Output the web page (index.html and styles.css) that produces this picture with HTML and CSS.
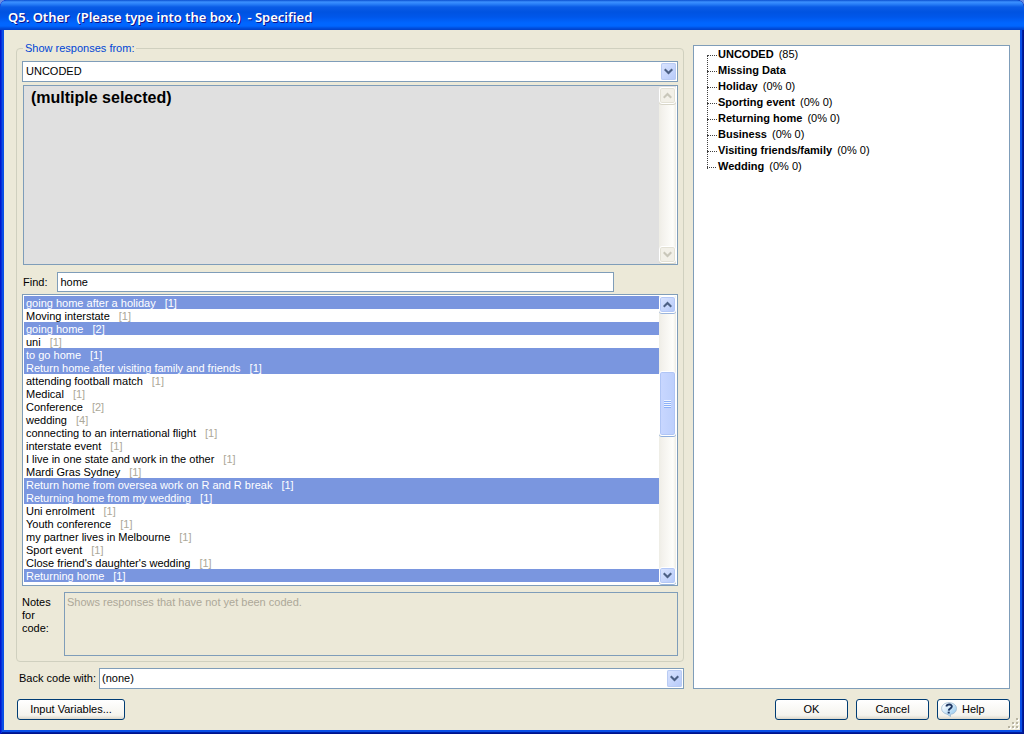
FILE: index.html
```html
<!DOCTYPE html>
<html lang="en">
<head>
<meta charset="utf-8">
<title>Q5. Other - Specified</title>
<link rel="stylesheet" href="styles.css">
</head>
<body>
<div class="window">
  <header class="titlebar"><h1 class="title">Q5. Other&nbsp; (Please type into the box.)&nbsp; - Specified</h1></header>
  <form class="client">
    <main class="panes">
      <section class="left">
        <fieldset class="group">
          <legend><label for="source">Show responses from:</label></legend>
          <div class="combo">
            <select id="source"><option>UNCODED</option></select>
            <span class="drop"><svg viewBox="0 0 9 7"><path d="M.7 1.200 4.500 5 8.300 1.200"/></svg></span>
          </div>
          <div class="preview">
            <textarea class="preview-text" aria-label="Selected response" readonly>(multiple selected)</textarea>
            <div class="scroll off">
              <button type="button" class="arrow" aria-label="Scroll up" disabled><svg viewBox="0 0 9 7"><path d="M.7 5.800 4.500 2 8.300 5.800"/></svg></button>
              <button type="button" class="arrow" aria-label="Scroll down" disabled><svg viewBox="0 0 9 7"><path d="M.7 1.200 4.500 5 8.300 1.200"/></svg></button>
            </div>
          </div>
          <div class="find">
            <label for="find">Find:</label>
            <input id="find" type="text" value="home">
          </div>
          <div class="list">
            <ul class="rows" role="listbox" aria-multiselectable="true" aria-label="Responses">
              <li class="sel" role="option" aria-selected="true">going home after a holiday<span>[1]</span></li>
              <li role="option">Moving interstate<span>[1]</span></li>
              <li class="sel" role="option" aria-selected="true">going home<span>[2]</span></li>
              <li role="option">uni<span>[1]</span></li>
              <li class="sel" role="option" aria-selected="true">to go home<span>[1]</span></li>
              <li class="sel" role="option" aria-selected="true">Return home after visiting family and friends<span>[1]</span></li>
              <li role="option">attending football match<span>[1]</span></li>
              <li role="option">Medical<span>[1]</span></li>
              <li role="option">Conference<span>[2]</span></li>
              <li role="option">wedding<span>[4]</span></li>
              <li role="option">connecting to an international flight<span>[1]</span></li>
              <li role="option">interstate event<span>[1]</span></li>
              <li role="option">I live in one state and work in the other<span>[1]</span></li>
              <li role="option">Mardi Gras Sydney<span>[1]</span></li>
              <li class="sel" role="option" aria-selected="true">Return home from oversea work on R and R break<span>[1]</span></li>
              <li class="sel" role="option" aria-selected="true">Returning home from my wedding<span>[1]</span></li>
              <li role="option">Uni enrolment<span>[1]</span></li>
              <li role="option">Youth conference<span>[1]</span></li>
              <li role="option">my partner lives in Melbourne<span>[1]</span></li>
              <li role="option">Sport event<span>[1]</span></li>
              <li role="option">Close friend's daughter's wedding<span>[1]</span></li>
              <li class="sel" role="option" aria-selected="true">Returning home<span>[1]</span></li>
            </ul>
            <div class="scroll">
              <button type="button" class="arrow" aria-label="Scroll up"><svg viewBox="0 0 9 7"><path d="M.7 5.800 4.500 2 8.300 5.800"/></svg></button>
              <div class="track"><div class="thumb"><i></i></div></div>
              <button type="button" class="arrow" aria-label="Scroll down"><svg viewBox="0 0 9 7"><path d="M.7 1.200 4.500 5 8.300 1.200"/></svg></button>
            </div>
          </div>
          <div class="notes">
            <label for="notes">Notes for code:</label>
            <textarea id="notes" disabled>Shows responses that have not yet been coded.</textarea>
          </div>
        </fieldset>
        <div class="back">
          <label for="back">Back code with:</label>
          <div class="combo">
            <select id="back"><option>(none)</option></select>
            <span class="drop"><svg viewBox="0 0 9 7"><path d="M.7 1.200 4.500 5 8.300 1.200"/></svg></span>
          </div>
        </div>
      </section>
      <ul class="tree">
        <li><b>UNCODED</b> (85)</li>
        <li><b>Missing Data</b></li>
        <li><b>Holiday</b> (0% 0)</li>
        <li><b>Sporting event</b> (0% 0)</li>
        <li><b>Returning home</b> (0% 0)</li>
        <li><b>Business</b> (0% 0)</li>
        <li><b>Visiting friends/family</b> (0% 0)</li>
        <li><b>Wedding</b> (0% 0)</li>
      </ul>
    </main>
    <footer class="actions">
      <button type="button" class="btn wide">Input Variables...</button>
      <button type="button" class="btn">OK</button>
      <button type="button" class="btn">Cancel</button>
      <button type="button" class="btn help">
        <svg viewBox="0 0 16 15">
          <defs><linearGradient id="bubble" x2="1" y2="1"><stop offset=".2" stop-color="#f4faff"/><stop offset="1" stop-color="#86c2ec"/></linearGradient></defs>
          <path d="M8 .7C3.600.7.600 3.200.600 6.500c0 2.900 2.400 5 5.400 5.700L9.500 14.500V12.300c3.600-.3 6-2.800 6-5.800C15.500 3.200 12.400.7 8 .7z" fill="url(#bubble)" stroke="#9ab8d0" stroke-width=".8"/>
          <path d="M5.300 4.400C6 1.900 11.200 1.900 10.800 4.700 10.500 6.500 7.900 6.500 7.700 8.600" fill="none" stroke="#1b3460" stroke-width="1.900"/>
          <path d="M6.700 9.700h2v1.800h-2z" fill="#1b3460"/>
        </svg>Help</button>
    </footer>
    <svg class="grip" viewBox="0 0 12 12"><path fill="#fff" d="M9 1h2v2H9zM5 5h2v2H5zM9 5h2v2H9zM1 9h2v2H1zM5 9h2v2H5zM9 9h2v2H9z"/><path fill="#b8b4a2" d="M8 0h2v2H8zM4 4h2v2H4zM8 4h2v2H8zM0 8h2v2H0zM4 8h2v2H4zM8 8h2v2H8z"/></svg>
  </form>
</div>
</body>
</html>
```
FILE: styles.css
```css
* { box-sizing: border-box; }
body {
  margin: 0;
  background: #6f8fe0;
  color: #000;
  font: 11px/13px "Liberation Sans", Arial, sans-serif;
}
input, select, textarea, button { margin: 0; font: inherit; color: inherit; border-radius: 0; outline: 0; }
ul { margin: 0; padding: 0; list-style: none; }

.window {
  display: flex;
  flex-direction: column;
  min-height: 100vh;
  padding: 0 4px 4px;
  border-radius: 7px 7px 0 0;
  background: #0a4fe6;
  box-shadow: inset 1px 0 #0019cf, inset -1px 0 #00138c, inset 0 -1px #00138c, inset 2px 0 #0831d9, inset -2px 0 #001ea0, inset 0 -2px #001ea0;
}
.titlebar {
  display: flex;
  align-items: center;
  height: 30px;
  margin: 0 -4px;
  padding: 4px 8px 0;
  border-radius: 7px 7px 0 0;
  background: linear-gradient(#0a4fd0 0, #3c91ff 2px, #2a80f8 4px, #0a5ce6 7px, #0053e1 12px, #0057ea 17px, #0066ff 23px, #0066ff 26px, #0050e0 28px, #0040c8 30px);
}
.title {
  margin: 0;
  color: #fff;
  font: 600 13px/16px "Trebuchet MS", "Noto Sans", sans-serif;
  text-shadow: 1px 1px #0f1089;
  white-space: nowrap;
}
.client {
  position: relative;
  display: flex;
  flex: 1;
  flex-direction: column;
  gap: 10px;
  padding: 12px 10px 10px 12px;
  background: #ece9d8;
}
.panes {
  display: grid;
  flex: 1;
  grid-template-columns: minmax(0, 668fr) minmax(0, 317fr);
  gap: 9px;
}
.left { display: flex; flex-direction: column; gap: 6px; }
.group {
  display: flex;
  flex: 1;
  flex-direction: column;
  min-width: 0;
  margin: 0;
  padding: 6px 5px 5px;
  border: 1px solid #d0d0bf;
  border-radius: 4px;
}
legend { margin-left: 1px; padding: 0 2px; color: #0046d5; }

.combo { position: relative; display: flex; flex: 1; }
.group > .combo { flex: none; }
select {
  width: 100%;
  height: 21px;
  padding: 0 20px 0 3px;
  border: 1px solid #7f9db9;
  background: #fff;
  appearance: none;
}
.drop {
  position: absolute;
  top: 2px;
  right: 2px;
  display: grid;
  place-items: center;
  width: 15px;
  height: 17px;
  border-radius: 2px;
  background: linear-gradient(135deg, #dbe5ff, #b5c9f9);
  box-shadow: inset 0 0 0 1px #b9cbf3;
  pointer-events: none;
}
.drop svg, .arrow svg { width: 9px; height: 7px; fill: none; stroke: #4d6185; stroke-width: 2.2; }

.preview, .list { display: flex; border: 1px solid #7f9db9; }
.preview { height: 180px; margin: 3px 0 7px 1px; padding: 1px 1px 1px 0; background: #e0e0e0; box-shadow: inset -1px 0 #fff; }
.preview-text {
  flex: 1;
  padding: 1px 7px;
  border: 0;
  background: transparent;
  font: bold 16px/20px "Liberation Sans", Arial, sans-serif;
  resize: none;
}
.scroll {
  display: flex;
  flex: none;
  flex-direction: column;
  justify-content: space-between;
  width: 17px;
  background: linear-gradient(90deg, #eeede5, #f3f1ec 3px, #fefefb 14px, #eeede5);
}
.arrow {
  display: grid;
  flex: none;
  place-items: center;
  height: 17px;
  padding: 0;
  border: 1px solid #fff;
  border-radius: 3px;
  background: linear-gradient(135deg, #dbe5ff, #b5c9f9);
  box-shadow: inset 0 0 0 1px #b4c8f6, 0 1px #9bb5dc;
}
.off .arrow { background: #f2f0e8; box-shadow: inset 0 0 0 1px #e3e1d5, 0 1px #d8d6c8; }
.off svg { stroke: #c9c7ba; }

.find { display: flex; align-items: center; gap: 10px; margin: 0 64px 2px 1px; }
.find input { flex: 1; min-width: 0; height: 20px; padding: 0 2px; border: 1px solid #7f9db9; background: #fff; }

.list { flex: 1; padding: 1px; background: #fff; }
.rows { flex: 1; min-width: 0; }
.rows li { height: 13px; padding: 0 2px; line-height: 15px; white-space: nowrap; }
.rows span { margin-left: 9px; color: #aca899; }
.rows .sel, .rows .sel span { color: #fff; }
.rows .sel { background: #7a96df; }
.track { display: flex; flex: 1; flex-direction: column; padding: 58px 0; }
.thumb {
  display: grid;
  place-items: center;
  height: 65px;
  border: 1px solid #fff;
  border-radius: 3px;
  background: linear-gradient(90deg, #c9d7ff, #bccffc);
  box-shadow: inset 0 0 0 1px #b0c5f5, 0 1px #8faedc;
}
.thumb i { width: 7px; height: 8px; background: repeating-linear-gradient(#eef4fe 0 1px, #8cb0f8 1px 2px); }

.notes { display: flex; gap: 4px; margin-top: 6px; }
.notes label { width: 38px; padding-top: 4px; }
.notes textarea {
  flex: 1;
  height: 64px;
  padding: 3px 2px;
  border: 1px solid #7f9db9;
  background: #ece9d8;
  color: #aca899;
  resize: none;
}
.back { display: flex; align-items: center; gap: 3px; padding-left: 3px; }
.back select { padding-left: 2px; }

.tree { margin-top: 3px; padding: 0 13px; border: 1px solid #7f9db9; background: #fff; }
.tree li {
  position: relative;
  padding-left: 11px;
  line-height: 16px;
  white-space: nowrap;
}
.tree b { margin-right: 2px; }
.tree li::before {
  content: "";
  position: absolute;
  top: 9px;
  left: 0;
  width: 9px;
  height: 17px;
  border-top: 1px dotted #404040;
  border-left: 1px dotted #404040;
}
.tree li:last-child::before { height: 1px; border-left: 0; }

.actions { display: flex; gap: 8px; padding-left: 1px; }
.btn {
  width: 73px;
  height: 21px;
  padding: 0;
  border: 1px solid #003c74;
  border-radius: 3px;
  background: linear-gradient(#fff, #f5f4ee 80%, #dcd8cb);
}
.wide { width: 108px; margin-right: auto; }
.help { display: flex; align-items: center; gap: 5px; padding-left: 3px; }
.help svg { width: 16px; height: 15px; }
.grip { position: absolute; right: 0; bottom: 0; width: 12px; height: 12px; }
```
